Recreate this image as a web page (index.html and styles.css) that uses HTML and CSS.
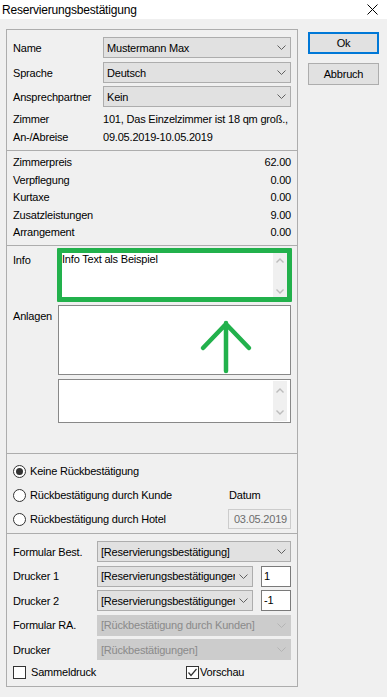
FILE: index.html
```html
<!DOCTYPE html>
<html>
  <head>
    <meta charset="utf-8">
    <title>Reservierungsbestätigung</title>
    <link rel="stylesheet" href="styles.css">
  </head>
  <body>
    <div class="titlebar">
      <span class="title">Reservierungsbestätigung</span>
      <svg class="close" width="11" height="11" viewBox="0 0 11 11">
        <path d="M0.5 0.5 L10.5 10.5 M10.5 0.5 L0.5 10.5" stroke="#000" stroke-width="1" fill="none" />
      </svg>
    </div>

    <div class="dialog">
      <div class="panel">
        <!-- Gast und Zimmer -->
        <div class="sec sec-guest">
          <div class="field">
            <span class="lbl">Name</span>
            <div class="combo">
              <span class="combo-text">Mustermann Max</span>
              <svg class="chev" width="9" height="5" viewBox="0 0 9 5"><polyline points="0.5,0.5 4.5,4.5 8.5,0.5" /></svg>
            </div>
          </div>
          <div class="field">
            <span class="lbl">Sprache</span>
            <div class="combo">
              <span class="combo-text">Deutsch</span>
              <svg class="chev" width="9" height="5" viewBox="0 0 9 5"><polyline points="0.5,0.5 4.5,4.5 8.5,0.5" /></svg>
            </div>
          </div>
          <div class="field">
            <span class="lbl">Ansprechpartner</span>
            <div class="combo">
              <span class="combo-text">Kein</span>
              <svg class="chev" width="9" height="5" viewBox="0 0 9 5"><polyline points="0.5,0.5 4.5,4.5 8.5,0.5" /></svg>
            </div>
          </div>
          <div class="line">
            <span class="lbl">Zimmer</span>
            <span class="val">101, Das Einzelzimmer ist 18 qm groß., Bad mit Dusche/WC</span>
          </div>
          <div class="line">
            <span class="lbl">An-/Abreise</span>
            <span class="val">09.05.2019-10.05.2019</span>
          </div>
        </div>

        <!-- Preise -->
        <div class="sec sec-prices">
          <div class="price"><span>Zimmerpreis</span><span>62.00</span></div>
          <div class="price"><span>Verpflegung</span><span>0.00</span></div>
          <div class="price"><span>Kurtaxe</span><span>0.00</span></div>
          <div class="price"><span>Zusatzleistungen</span><span>9.00</span></div>
          <div class="price"><span>Arrangement</span><span>0.00</span></div>
        </div>

        <!-- Info und Anlagen -->
        <div class="sec sec-notes">
          <span class="note-lbl info-lbl">Info</span>
          <div class="memo memo-marked">
            <div class="memo-text">Info Text als Beispiel</div>
            <div class="scroll">
              <svg width="8" height="5" viewBox="0 0 8 5"><polyline points="0.5,4.5 4,1 7.5,4.5" /></svg>
              <svg width="8" height="5" viewBox="0 0 8 5"><polyline points="0.5,0.5 4,4 7.5,0.5" /></svg>
            </div>
          </div>
          <span class="note-lbl anl-lbl">Anlagen</span>
          <div class="memo memo-list">
            <svg class="arrow" width="233" height="70" viewBox="0 0 233 70">
              <path d="M168 66 L168 18 M145 43 L168 19 L191 43" />
            </svg>
          </div>
          <span></span>
          <div class="memo memo-small">
            <div class="memo-text"></div>
            <div class="scroll">
              <svg width="8" height="5" viewBox="0 0 8 5"><polyline points="0.5,4.5 4,1 7.5,4.5" /></svg>
              <svg width="8" height="5" viewBox="0 0 8 5"><polyline points="0.5,0.5 4,4 7.5,0.5" /></svg>
            </div>
          </div>
        </div>

        <!-- Rückbestätigung -->
        <div class="sec sec-confirm">
          <div class="opt"><span class="radio on"></span>Keine Rückbestätigung</div>
          <span></span>
          <div class="opt"><span class="radio"></span>Rückbestätigung durch Kunde</div>
          <span class="date-lbl">Datum</span>
          <div class="opt"><span class="radio"></span>Rückbestätigung durch Hotel</div>
          <div class="date">03.05.2019</div>
        </div>

        <!-- Druck -->
        <div class="sec sec-print">
          <div class="prow">
            <span class="plbl">Formular Best.</span>
            <div class="combo">
              <span class="combo-text">[Reservierungsbestätigung]</span>
              <svg class="chev" width="9" height="5" viewBox="0 0 9 5"><polyline points="0.5,0.5 4.5,4.5 8.5,0.5" /></svg>
            </div>
          </div>
          <div class="prow">
            <span class="plbl">Drucker 1</span>
            <div class="combo">
              <span class="combo-text">[Reservierungsbestätigungen]</span>
              <svg class="chev" width="9" height="5" viewBox="0 0 9 5"><polyline points="0.5,0.5 4.5,4.5 8.5,0.5" /></svg>
            </div>
            <div class="num">1</div>
          </div>
          <div class="prow">
            <span class="plbl">Drucker 2</span>
            <div class="combo">
              <span class="combo-text">[Reservierungsbestätigungen]</span>
              <svg class="chev" width="9" height="5" viewBox="0 0 9 5"><polyline points="0.5,0.5 4.5,4.5 8.5,0.5" /></svg>
            </div>
            <div class="num">-1</div>
          </div>
          <div class="prow">
            <span class="plbl">Formular RA.</span>
            <div class="combo disabled">
              <span class="combo-text">[Rückbestätigung durch Kunden]</span>
              <svg class="chev" width="9" height="5" viewBox="0 0 9 5"><polyline points="0.5,0.5 4.5,4.5 8.5,0.5" /></svg>
            </div>
          </div>
          <div class="prow">
            <span class="plbl">Drucker</span>
            <div class="combo disabled">
              <span class="combo-text">[Rückbestätigungen]</span>
              <svg class="chev" width="9" height="5" viewBox="0 0 9 5"><polyline points="0.5,0.5 4.5,4.5 8.5,0.5" /></svg>
            </div>
          </div>
          <div class="checks">
            <div class="chk chk-first"><span class="box"></span>Sammeldruck</div>
            <div class="chk chk-tight">
              <span class="box">
                <svg width="11" height="11" viewBox="0 0 11 11"><polyline points="1.5,5.5 4,8.5 9.5,2" /></svg>
              </span>Vorschau
            </div>
          </div>
        </div>
      </div>

      <div class="buttons">
        <button class="btn btn-default">Ok</button>
        <button class="btn">Abbruch</button>
      </div>
    </div>
  </body>
</html>
```

FILE: styles.css
```css
* {
  box-sizing: border-box;
}

body {
  margin: 0;
  width: 387px;
  height: 697px;
  overflow: hidden;
  background-color: #f0f0f0;
  color: #000;
  font-family: "Liberation Sans", Arial, sans-serif;
  font-size: 11px;
  letter-spacing: -0.2px;
}

.titlebar {
  height: 19px;
  background-color: #fff;
  display: flex;
  align-items: center;
  justify-content: space-between;
  padding: 0 9px 0 2px;
}

.title {
  font-size: 12px;
}

.close {
  margin-top: -1px;
}

.dialog {
  display: flex;
  align-items: flex-start;
  gap: 10px;
  padding: 10px 0 0 6px;
}

.panel {
  width: 292px;
  height: 658px;
  border: 1px solid #adadad;
  display: flex;
  flex-direction: column;
}

.sec {
  border-top: 1px solid #adadad;
  padding: 0 6px;
}

.sec:first-child {
  border-top: 0;
}

/* Gast */
.sec-guest {
  padding: 7px 6px 4px;
}

.field {
  display: flex;
  align-items: center;
  height: 21px;
  margin-bottom: 4px;
}

.field:nth-child(2) {
  margin-bottom: 3px;
}

.field:nth-child(3) {
  margin-bottom: 3px;
}

.lbl {
  width: 90px;
  flex-shrink: 0;
  white-space: nowrap;
}

.line {
  display: flex;
  align-items: center;
  height: 18px;
}

.val {
  flex: 1;
  overflow: hidden;
  white-space: nowrap;
}

.combo {
  flex: 1;
  height: 21px;
  display: flex;
  align-items: center;
  background-color: #e1e1e1;
  border: 1px solid #adadad;
  padding-left: 3px;
  min-width: 0;
}

.combo-text {
  flex: 1;
  overflow: hidden;
  white-space: nowrap;
}

.chev {
  flex-shrink: 0;
  margin: 0 4px 0 4px;
  fill: none;
  stroke: #606060;
  stroke-width: 1;
}

.combo.disabled {
  background-color: #cccccc;
  border-color: #cccccc;
  color: #8a8a8a;
}

.combo.disabled .chev {
  stroke: #b4b4b4;
}

/* Preise */
.sec-prices {
  padding: 3px 6px 3.5px;
}

.price {
  display: flex;
  justify-content: space-between;
  height: 17.5px;
  line-height: 17.5px;
}

/* Info, Anlagen */
.sec-notes {
  display: grid;
  grid-template-columns: 45px 1fr;
  grid-template-rows: 54px 70px 45px;
  row-gap: 3px;
  padding: 2px 6px 0;
  height: 208px;
}

.sec-notes .memo-small {
  margin-top: 1px;
}

.note-lbl {
  line-height: 14px;
}

.info-lbl {
  padding-top: 5px;
}

.anl-lbl {
  padding-top: 4px;
}

.memo {
  background-color: #fff;
  border: 1px solid #888;
  display: flex;
}

.memo-marked {
  margin: 0 -1px;
  border: 5px solid #22b14c;
  border-radius: 1px;
}

.memo-text {
  flex: 1;
  line-height: 13px;
}

.scroll {
  width: 14px;
  background-color: #f0f0f0;
  display: flex;
  flex-direction: column;
  align-items: center;
  justify-content: space-between;
  padding: 5px 0 3px;
}

.scroll svg {
  fill: none;
  stroke: #bcbcbc;
  stroke-width: 1.4;
}

.memo-list {
  position: relative;
}

.arrow {
  position: absolute;
  left: -1px;
  top: -1px;
  fill: none;
  stroke: #22b14c;
  stroke-width: 4.5;
  stroke-linecap: round;
  stroke-linejoin: round;
}

.memo-small {
  padding: 1px 3px 1px 0;
}

.memo-small .scroll {
  padding: 7px 0 6px;
}

/* Rückbestätigung */
.sec-confirm {
  display: grid;
  grid-template-columns: 1fr 63px;
  grid-auto-rows: 24px;
  align-items: center;
  padding: 5px 6px 2px;
}

.opt {
  display: flex;
  align-items: center;
  gap: 4px;
}

.radio {
  width: 13px;
  height: 13px;
  border: 1px solid #333;
  border-radius: 50%;
  background-color: #fff;
  display: flex;
  align-items: center;
  justify-content: center;
}

.radio.on::after {
  content: "";
  width: 7px;
  height: 7px;
  border-radius: 50%;
  background-color: #333;
}

.date-lbl {
  padding-left: 1px;
}

.date {
  height: 20px;
  line-height: 18px;
  border: 1px solid #cccccc;
  background-color: #f0f0f0;
  color: #6d6d6d;
  text-align: right;
  padding-right: 3px;
}

/* Druck */
.sec-print {
  flex: 1;
  padding: 7px 6px 0;
}

.prow {
  display: flex;
  align-items: center;
  height: 21px;
  margin-bottom: 3.5px;
}

.plbl {
  width: 84px;
  flex-shrink: 0;
}

.num {
  width: 30px;
  height: 21px;
  margin-left: 8px;
  background-color: #fff;
  border: 1px solid #7a7a7a;
  line-height: 19px;
  padding-left: 2px;
}

.checks {
  display: flex;
  align-items: center;
  height: 17px;
  margin-top: 2px;
}

.chk {
  display: flex;
  align-items: center;
  gap: 5px;
}

.chk-first {
  width: 173px;
  flex-shrink: 0;
}

.chk-tight {
  gap: 1px;
}

.box {
  width: 13px;
  height: 13px;
  border: 1px solid #333;
  background-color: #fff;
  display: flex;
}

.box svg {
  fill: none;
  stroke: #333;
  stroke-width: 1.2;
}

/* Buttons */
.buttons {
  display: flex;
  flex-direction: column;
  gap: 9px;
  padding-top: 3px;
}

.btn {
  width: 71px;
  height: 22px;
  background-color: #e1e1e1;
  border: 1px solid #adadad;
  font-family: "Liberation Sans", Arial, sans-serif;
  font-size: 11px;
  letter-spacing: -0.2px;
  color: #000;
  padding: 0;
}

.btn-default {
  border: 2px solid #0078d7;
}
```
